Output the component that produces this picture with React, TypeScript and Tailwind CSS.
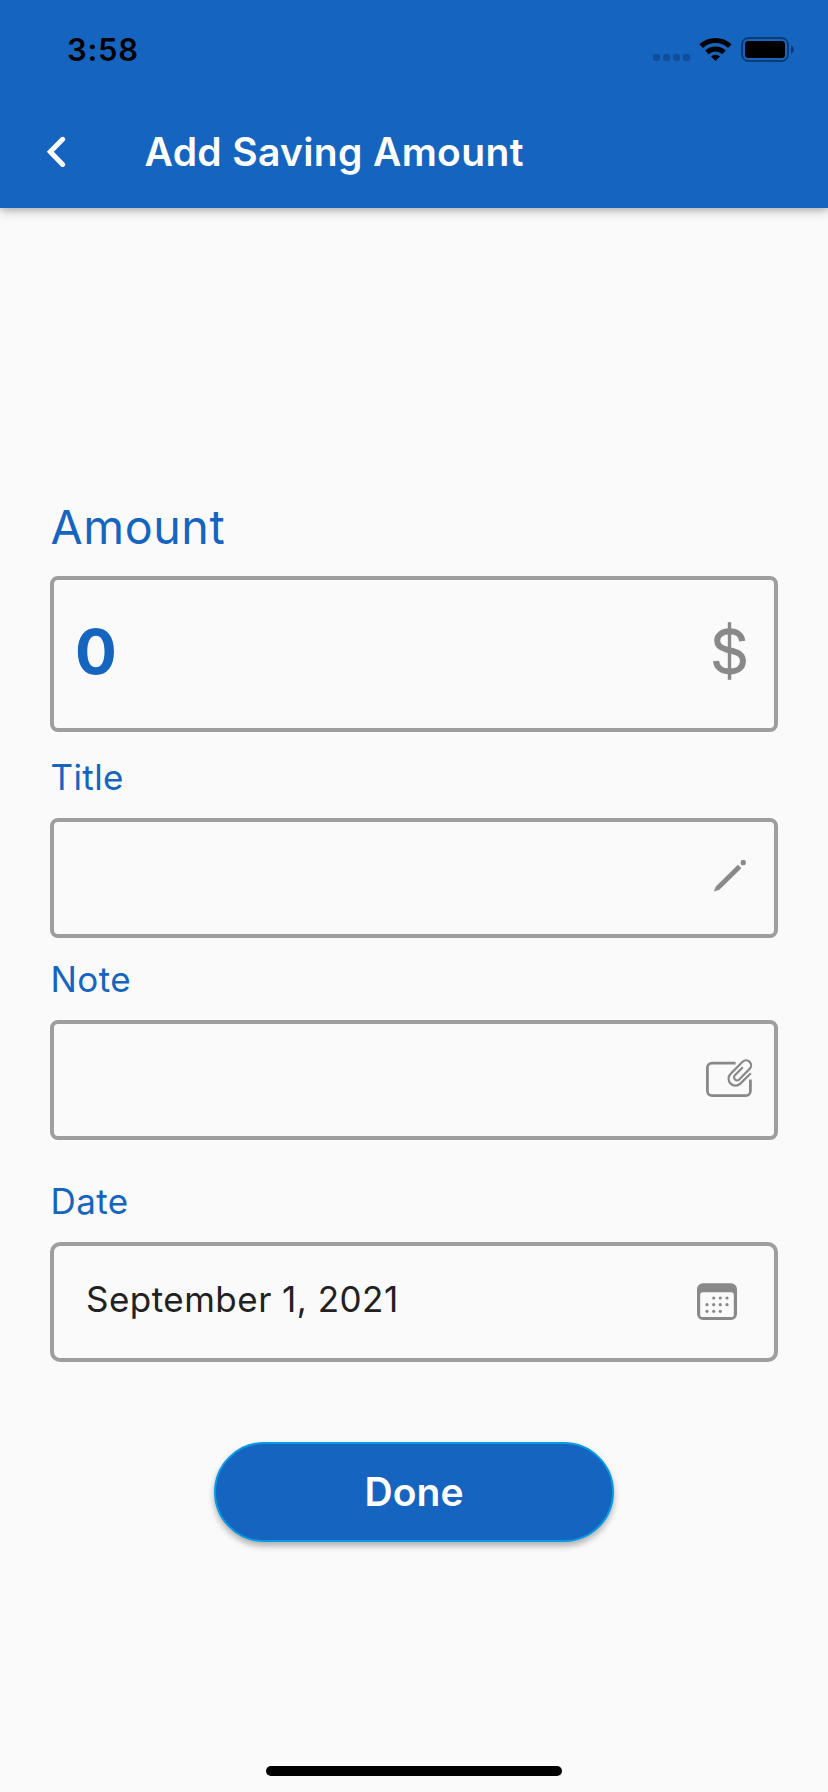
import type { ReactNode } from "react";

function StatusBar() {
  return (
    <div className="flex h-[96px] items-start justify-between pl-[67px] pr-[34px]">
      <span className="mt-[31px] text-[31px] leading-[38px] font-semibold tracking-[0.7px] text-black">3:58</span>
      <svg width="141" height="26" viewBox="653 36 141 26" className="mt-[36px]">
        <g fill="#000" fillOpacity="0.22">
          <rect x="653" y="54" width="7" height="7" rx="2" />
          <rect x="663" y="54" width="7" height="7" rx="2" />
          <rect x="673" y="54" width="7" height="7" rx="2" />
          <rect x="683" y="54" width="7" height="7" rx="2" />
        </g>
        <path d="M701.2 46.2A20.8 20.8 0 0 1 729.8 46.2" fill="none" stroke="#000" strokeWidth="5.2" />
        <path d="M706.9 52.3A12.6 12.6 0 0 1 724.1 52.3" fill="none" stroke="#000" strokeWidth="5" />
        <path d="M715.5 61L711 56.4A6.6 6.6 0 0 1 720 56.4Z" fill="#000" />
        <rect x="742" y="38" width="46" height="23" rx="6.5" fill="none" stroke="#000" strokeOpacity="0.4" strokeWidth="2" />
        <rect x="745" y="41" width="40" height="17" rx="3.5" fill="#000" />
        <path d="M791 45.2C794.8 46.6 794.8 52.4 791 53.8Z" fill="#000" fillOpacity="0.45" />
      </svg>
    </div>
  );
}

function PencilIcon() {
  return (
    <svg width="34" height="34" viewBox="712 859 34 34" fill="#898989">
      <path d="M714.2 891.2L716.2 886.4L737.8 865.1L741.1 868.3L719.4 889.4Z" stroke="#898989" strokeWidth="0.5" strokeLinejoin="round" />
      <rect x="740.7" y="860.1" width="5.1" height="5.1" rx="2" />
    </svg>
  );
}

function NoteClipIcon() {
  return (
    <svg width="48" height="40" viewBox="705 1058 48 40" fill="none" stroke="#898989">
      <path d="M735.6 1063.2H712A4.6 4.6 0 0 0 707.4 1067.8V1091A4.6 4.6 0 0 0 712 1095.6H745.8A4.6 4.6 0 0 0 750.4 1091V1079.6" strokeWidth="2.8" />
      <path d="M750.8 1073.2L740.3 1083.6A6.7 6.7 0 0 1 730.6 1073.9L742.6 1061.8A4.9 4.9 0 0 1 749.6 1068.9L739.2 1079.4A3 3 0 0 1 734.9 1075.2L742.8 1067.3" strokeWidth="2.2" />
    </svg>
  );
}

function CalendarIcon() {
  const dots = [
    [720.3, 1298], [727, 1298], [713.7, 1298],
    [707, 1304.7], [713.7, 1304.7], [720.3, 1304.7], [727, 1304.7],
    [707, 1311.3], [713.7, 1311.3], [720.3, 1311.3],
  ];
  return (
    <svg width="42" height="38" viewBox="696 1283 42 38" fill="#898989">
      <path
        fillRule="evenodd"
        d="M703 1283.2H731A6 6 0 0 1 737 1289.2V1314A6 6 0 0 1 731 1320H703A6 6 0 0 1 697 1314V1289.2A6 6 0 0 1 703 1283.2ZM702.8 1292.3A2.6 2.6 0 0 0 700.2 1294.9V1314.4A2.6 2.6 0 0 0 702.8 1317H731.2A2.6 2.6 0 0 0 733.8 1314.4V1294.9A2.6 2.6 0 0 0 731.2 1292.3Z"
      />
      {dots.map(([x, y]) => (
        <circle key={`${x}-${y}`} cx={x} cy={y} r="1.6" />
      ))}
    </svg>
  );
}

function DollarIcon() {
  return (
    <svg width="34" height="58" viewBox="713 622 34 58" fill="none" stroke="#898989">
      <path d="M729.5 622.2V679.8" strokeWidth="3.4" />
      <path
        strokeWidth="6"
        d="M742.3 641.2C741.6 634.8 736.8 631.3 729.6 631.3C722.4 631.3 717.2 635 717.2 640.6C717.2 645.4 720.4 648 726.4 649.5L732.4 651C739.6 652.8 742.9 655.6 742.9 661.2C742.9 667.5 737.7 671.4 729.8 671.4C721.9 671.4 716.7 667.6 716 661"
      />
    </svg>
  );
}

function Box({ className, children }: { className: string; children: ReactNode }) {
  return (
    <div className={`flex items-center border-4 border-[#9e9e9e] ${className}`}>{children}</div>
  );
}

const label = "pl-[0.5px] text-[35px] leading-[44px] tracking-[0.4px] text-[#1565c0]";

export default function App() {
  return (
    <div className="flex h-[1792px] w-[828px] flex-col bg-[#fafafa] font-['Inter','Liberation_Sans',sans-serif]">
      <header className="h-[208px] bg-[#1565c0] shadow-[0_4px_10px_rgba(0,0,0,0.2),0_2px_5px_rgba(0,0,0,0.13)]">
        <StatusBar />
        <div className="flex h-[112px] items-center pl-[46px]">
          <svg width="20" height="32" viewBox="46 136 20 32" fill="none" stroke="#fff" strokeWidth="5" strokeLinecap="round">
            <path d="M62.6 139.3L50.3 151.8L62.6 164.4" />
          </svg>
          <h1 className="ml-[78.5px] text-[39px] leading-[48px] font-semibold tracking-[0.35px] text-white">Add Saving Amount</h1>
        </div>
      </header>

      <main className="flex flex-col px-[50px]">
        <div className="mt-[291px] pl-[0.5px] text-[46.6px] leading-[56px] tracking-[0.6px] text-[#1565c0]">Amount</div>
        <Box className="mt-[21px] h-[156px] justify-between rounded-[8px] pl-[21px] pr-[27px]">
          <span className="mb-[5px] text-[62px] leading-[76px] font-bold text-[#1565c0]">0</span>
          <div className="mb-[6px]"><DollarIcon /></div>
        </Box>

        <div className={`mt-[23px] ${label}`}>Title</div>
        <Box className="mt-[19px] h-[120px] justify-end rounded-[8px] pr-[28px]">
          <div className="mb-[4px]"><PencilIcon /></div>
        </Box>

        <div className={`mt-[19px] ${label}`}>Note</div>
        <Box className="mt-[19px] h-[120px] justify-end rounded-[8px] pr-[21px]">
          <div className="mb-[4px]"><NoteClipIcon /></div>
        </Box>

        <div className={`mt-[39px] ${label}`}>Date</div>
        <Box className="mt-[19px] h-[120px] justify-between rounded-[10px] pl-[32px] pr-[36px]">
          <span className="mb-[6px] text-[35px] leading-[44px] tracking-[0.48px] text-[#212121]">September 1, 2021</span>
          <CalendarIcon />
        </Box>

        <button className="mt-[80px] flex h-[100px] w-[400px] items-center justify-center self-center rounded-full border-2 border-[#039be5] bg-[#1565c0] text-[39px] leading-[48px] font-semibold tracking-[0.1px] text-white shadow-[0_4px_6px_rgba(0,0,0,0.3)]">
          Done
        </button>
      </main>

      <div className="mt-auto mb-[16px] h-[10px] w-[296px] self-center rounded-full bg-black" />
    </div>
  );
}
